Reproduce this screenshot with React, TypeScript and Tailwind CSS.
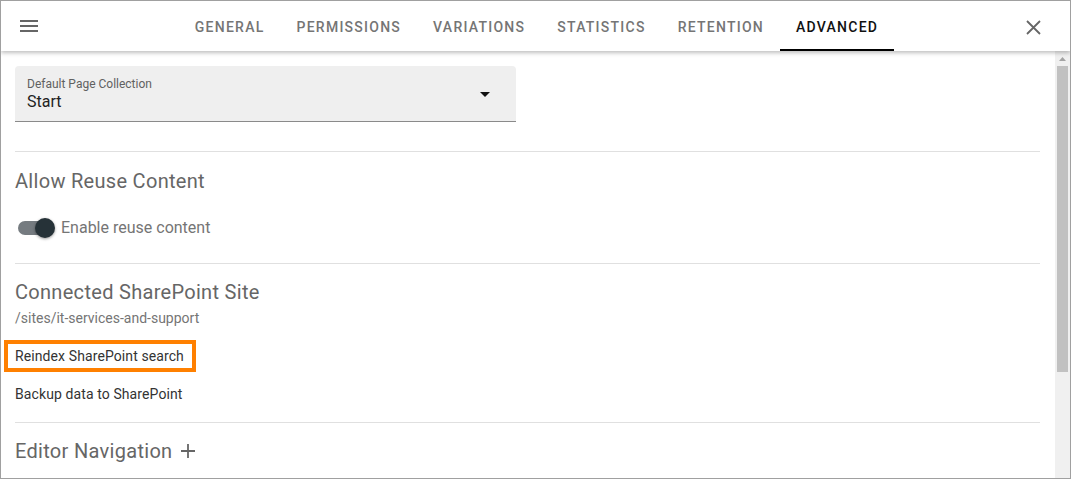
import React from "react";

const tabs = ["GENERAL", "PERMISSIONS", "VARIATIONS", "STATISTICS", "RETENTION", "ADVANCED"];

function Divider() {
  return <div className="h-px bg-[#e0e0e0]" />;
}

export default function App() {
  return (
    <div
      className="w-[1071px] h-[479px] border border-[#a0a0a0] bg-white flex flex-col overflow-hidden"
      style={{ fontFamily: "Roboto, 'Liberation Sans', sans-serif" }}
    >
      {/* Header */}
      <div className="relative z-10 h-[50px] shrink-0 flex items-center bg-white shadow-[0_2px_4px_rgba(0,0,0,0.25)]">
        <div className="w-[54px] flex justify-center pl-[1px]">
          <svg width="18" height="12" viewBox="0 0 18 12">
            <rect x="0" y="0" width="18" height="2" fill="#666" />
            <rect x="0" y="5" width="18" height="2" fill="#666" />
            <rect x="0" y="10" width="18" height="2" fill="#666" />
          </svg>
        </div>
        <div className="flex-1 flex justify-center h-full pl-[2px]">
          {tabs.map((t) => {
            const active = t === "ADVANCED";
            return (
              <div
                key={t}
                className={`relative h-full flex items-center pt-[2px] px-4 text-[14px] font-medium tracking-[1.25px] ${
                  active ? "text-[#111]" : "text-[#757575]"
                }`}
              >
                {t}
                {active && <div className="absolute left-0 right-0 bottom-0 h-[2px] bg-black" />}
              </div>
            );
          })}
        </div>
        <div className="w-[54px] flex justify-center pr-[1px]">
          <svg width="15" height="15" viewBox="0 0 15 15" className="relative -left-[9px] top-[1px]">
            <path d="M1 1 L14 14 M14 1 L1 14" stroke="#666" strokeWidth="1.8" />
          </svg>
        </div>
      </div>

      {/* Body */}
      <div className="flex-1 flex min-h-0">
        <div className="flex-1 pl-[14px] pr-[15px] pt-[15px]">
          {/* Select */}
          <div className="w-[501px] h-[56px] bg-[#efefef] rounded-t-[4px] border-b border-[#8a8a8a] flex items-start justify-between px-3 pt-[10px]">
            <div className="flex flex-col">
              <span className="text-[12px] leading-[16px] text-[#616161]">Default Page Collection</span>
              <span className="text-[16px] leading-[19px] text-[#222]">Start</span>
            </div>
            <svg width="10" height="5" viewBox="0 0 10 5" className="mt-[16px] mr-[14px]">
              <path d="M0 0 L10 0 L5 5 Z" fill="#111" />
            </svg>
          </div>

          <div className="mt-[29px]">
            <Divider />
          </div>

          <h2 className="pt-[15px] text-[20px] leading-[28px] tracking-[0.3px] text-[#666]">Allow Reuse Content</h2>

          <div className="mt-[21px] flex items-center h-[24px]">
            <div className="relative w-[46px] h-[24px] flex items-center">
              <div className="ml-[3px] w-[33px] h-[14px] rounded-full bg-[#757b80]" />
              <div className="absolute left-[20px] top-[2px] w-[20px] h-[20px] rounded-full bg-[#263238] shadow-[0_1px_3px_rgba(0,0,0,0.4)]" />
            </div>
            <span className="text-[16px] leading-[24px] text-[#757575]">Enable reuse content</span>
          </div>

          <div className="mt-[23px]">
            <Divider />
          </div>

          <h2 className="pt-[14px] text-[20px] leading-[28px] tracking-[0.3px] text-[#666]">Connected SharePoint Site</h2>
          <div className="mt-[2px] text-[14px] leading-[20px] text-[#757575]">/sites/it-services-and-support</div>

          <div className="mt-[18px] relative w-fit text-[14px] leading-[20px] text-[#333] tracking-[0.1px]">
            Reindex SharePoint search
            <div className="absolute -left-[11px] -right-[12px] -top-[6px] -bottom-[6px] border-[4px] border-[#ff8000]" />
          </div>

          <div className="mt-[18px] text-[14px] leading-[20px] text-[#333] tracking-[0.1px]">Backup data to SharePoint</div>

          <div className="mt-[18px]">
            <Divider />
          </div>

          <div className="pt-[14px] flex items-center text-[20px] leading-[28px] tracking-[0.3px] text-[#666]">
            Editor Navigation
            <svg width="16" height="16" viewBox="0 0 16 16" className="ml-[8px]">
              <path d="M8 1 V15 M1 8 H15" stroke="#666" strokeWidth="1.8" />
            </svg>
          </div>
        </div>

        {/* Scrollbar */}
        <div className="w-[15px] bg-[#f0f0f0] flex flex-col items-center">
          <div className="h-[15px] flex items-center justify-center">
            <svg width="7" height="4" viewBox="0 0 7 4">
              <path d="M0 4 L3.5 0 L7 4 Z" fill="#a3a3a3" />
            </svg>
          </div>
          <div className="w-[11px] h-[306px] bg-[#c1c1c1]" />
        </div>
      </div>
    </div>
  );
}
